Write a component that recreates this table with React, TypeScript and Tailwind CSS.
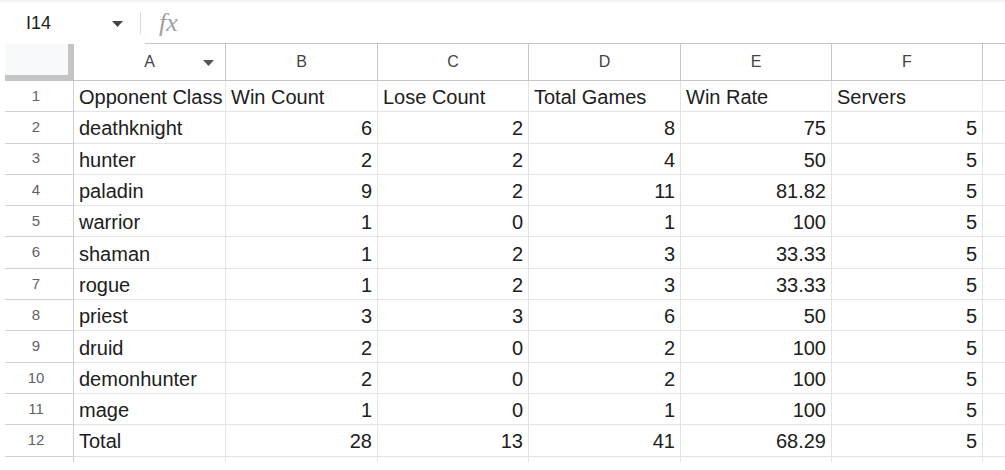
import React from "react";

const rows: (string | number)[][] = [
  ["deathknight", 6, 2, 8, "75", 5],
  ["hunter", 2, 2, 4, "50", 5],
  ["paladin", 9, 2, 11, "81.82", 5],
  ["warrior", 1, 0, 1, "100", 5],
  ["shaman", 1, 2, 3, "33.33", 5],
  ["rogue", 1, 2, 3, "33.33", 5],
  ["priest", 3, 3, 6, "50", 5],
  ["druid", 2, 0, 2, "100", 5],
  ["demonhunter", 2, 0, 2, "100", 5],
  ["mage", 1, 0, 1, "100", 5],
  ["Total", 28, 13, 41, "68.29", 5],
];

const headers = ["Opponent Class", "Win Count", "Lose Count", "Total Games", "Win Rate", "Servers"];
const letters = ["A", "B", "C", "D", "E", "F"];
const widths = [152, 152, 151, 152, 151, 151];

const Tri = ({ className }: { className?: string }) => (
  <svg width="11" height="6" viewBox="0 0 11 6" className={className}>
    <path d="M0 0 L11 0 L5.5 6 Z" fill="currentColor" />
  </svg>
);

export default function App() {
  const rowH = "h-[31.3px]";
  return (
    <div
      className="w-[1005px] h-[470px] bg-white overflow-hidden text-[#202020]"
      style={{ fontFamily: '"Liberation Sans", Arial, sans-serif' }}
    >
      <div className="h-[2px] bg-[#f3f3f3]" />
      {/* formula bar */}
      <div className="flex h-[42px]">
        <div className="w-[145px] flex items-center pl-[26px] shrink-0">
          <span className="text-[18px] w-[86px]">I14</span>
          <Tri className="text-[#444] mt-[2px]" />
          <div className="ml-[17px] w-px h-[22px] bg-[#dadce0]" />
        </div>
        <div className="flex-1 flex items-center border-b border-[#c7c7c7]">
          <span
            className="ml-[14px] text-[26px] italic text-[#a0a0a0] leading-none"
            style={{ fontFamily: '"Liberation Serif", serif' }}
          >
            fx
          </span>
        </div>
      </div>
      {/* header row */}
      <div className="flex h-[37px] pl-[5px]">
        <div className="w-[69px] shrink-0 flex bg-[#f8f9fa]">
          <div className="flex-1 flex flex-col">
            <div className="flex-1" />
            <div className="h-[6px] bg-[#c4c4c4]" />
          </div>
          <div className="w-[6px] bg-[#c4c4c4]" />
        </div>
        {letters.map((l, i) => (
          <div
            key={l}
            style={{ width: widths[i] }}
            className="shrink-0 relative flex items-center justify-center border-r border-b border-[#c7c7c7] text-[16px] text-[#444]"
          >
            {l}
            {i === 0 && <Tri className="absolute right-[11px] top-[16px] text-[#555]" />}
          </div>
        ))}
        <div className="flex-1 border-b border-[#c7c7c7]" />
      </div>
      {[headers, ...rows].map((r, ri) => (
        <div key={ri} className={`flex pl-[5px] ${rowH}`}>
          <div className="w-[69px] shrink-0 flex items-center justify-center border-b border-r border-[#d0d0d0] text-[15px] text-[#5f6368] pr-[6px]">
            {ri + 1}
          </div>
          {r.map((c, ci) => {
            const num = ri > 0 && ci > 0;
            return (
              <div
                key={ci}
                style={{ width: widths[ci] }}
                className={`shrink-0 flex items-center pt-[2px] border-r border-b border-[#e2e3e3] text-[20px] whitespace-nowrap overflow-visible ${
                  num ? "justify-end pr-[5px]" : "pl-[5px]"
                }`}
              >
                {c}
              </div>
            );
          })}
          <div className="flex-1 border-b border-[#e2e3e3]" />
        </div>
      ))}
      <div className="flex pl-[5px] h-[5px]">
        <div className="w-[69px] shrink-0 border-r border-[#d0d0d0]" />
        {widths.map((w, i) => (
          <div key={i} style={{ width: w }} className="shrink-0 border-r border-[#e2e3e3]" />
        ))}
      </div>
    </div>
  );
}
